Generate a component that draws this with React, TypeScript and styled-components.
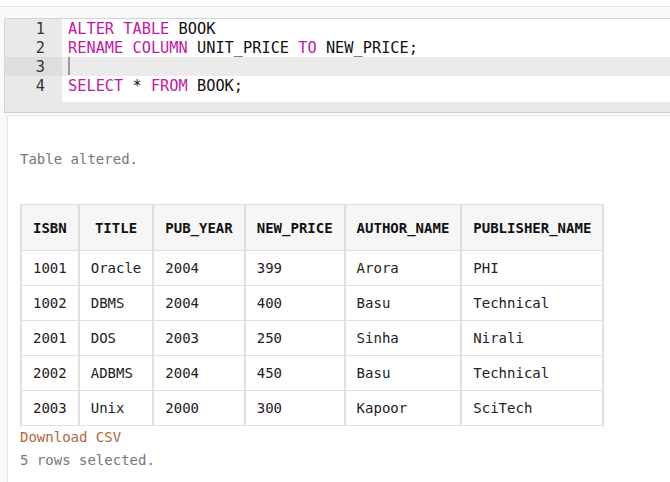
import React from "react";
import styled, { createGlobalStyle } from "styled-components";

const Global = createGlobalStyle`
  html, body { margin: 0; padding: 0; background: #ffffff; }
  body { font-family: "DejaVu Sans Mono", monospace; }
`;

const Page = styled.div`
  padding-top: 6px;
  width: 670px;
  height: 482px;
  overflow: hidden;
  box-sizing: border-box;
`;

const Workspace = styled.div`
  border-top: 1px solid #e2e2e2;
  background: #f9f9f9;
  padding-top: 11px;
  height: 100%;
`;

const Editor = styled.div`
  margin-left: 4px;
  border-top: 1px solid #d4d4d4;
  border-left: 1px solid #d4d4d4;
  background: #ffffff;
`;

const Lines = styled.div`
  display: grid;
  grid-template-columns: 57px 1fr;
  grid-auto-rows: 19px;
  background: linear-gradient(to right, #e9e9e9 57px, #ffffff 57px);
  padding-bottom: 7px;
  font-family: "DejaVu Sans Mono", monospace;
  font-size: 15.3px;
`;

const Gutter = styled.div<{ $active?: boolean }>`
  background: ${(p) => (p.$active ? "#dedede" : "#e9e9e9")};
  color: #333;
  text-align: right;
  padding-right: 17px;
  padding-top: 1px;
  line-height: 18px;
`;

const Code = styled.div<{ $active?: boolean }>`
  background: ${(p) => (p.$active ? "#ebebeb" : "transparent")};
  padding-left: 6px;
  padding-top: 1px;
  line-height: 18px;
  white-space: pre;
  color: #111;
`;

const Kw = styled.span`
  color: #c3199f;
`;

const Cursor = styled.span`
  display: inline-block;
  width: 2px;
  height: 18px;
  margin-top: -1px;
  background: #9a9a9a;
  vertical-align: top;
`;

const Scrollbar = styled.div`
  height: 10px;
  background: #e8e8e8;
  border-bottom: 1px solid #cfcfcf;
`;

const Output = styled.div`
  margin-left: 7px;
  margin-top: 2px;
  border-left: 1px solid #e6e6e6;
  border-top: 1px solid #ededed;
  background: #ffffff;
  padding: 33px 12px 20px 12px;
  font-family: "DejaVu Sans Mono", monospace;
  font-size: 14px;
  height: 400px;
`;

const Message = styled.div`
  color: #777;
  line-height: 20px;
  margin-bottom: 35px;
`;

const Table = styled.table`
  border-collapse: collapse;
  font-size: 14px;
  font-family: "DejaVu Sans Mono", monospace;
`;

const Th = styled.th`
  background: #f6f6f6;
  border: 1px solid #dedede;
  border-left-width: 2px;
  border-right-width: 2px;
  height: 45px;
  padding: 0 11px;
  font-weight: bold;
  color: #111;
  text-align: center;
  white-space: nowrap;
`;

const Td = styled.td`
  border: 1px solid #e0e0e0;
  border-left: 2px solid #e0e0e0;
  border-right: 2px solid #e0e0e0;
  height: 34px;
  padding: 0 11px;
  color: #222;
  white-space: nowrap;
`;

const Link = styled.div`
  color: #b0683a;
  line-height: 20px;
  margin-top: 1px;
`;

const Footer = styled.div`
  color: #777;
  line-height: 20px;
  margin-top: 3px;
`;

const columns = ["ISBN", "TITLE", "PUB_YEAR", "NEW_PRICE", "AUTHOR_NAME", "PUBLISHER_NAME"];
const rows = [
  ["1001", "Oracle", "2004", "399", "Arora", "PHI"],
  ["1002", "DBMS", "2004", "400", "Basu", "Technical"],
  ["2001", "DOS", "2003", "250", "Sinha", "Nirali"],
  ["2002", "ADBMS", "2004", "450", "Basu", "Technical"],
  ["2003", "Unix", "2000", "300", "Kapoor", "SciTech"],
];

export default function App() {
  return (
    <>
      <Global />
      <Page>
        <Workspace>
          <Editor>
            <Lines>
              <Gutter>1</Gutter>
              <Code>
                <Kw>ALTER</Kw> <Kw>TABLE</Kw> BOOK
              </Code>
              <Gutter>2</Gutter>
              <Code>
                <Kw>RENAME</Kw> <Kw>COLUMN</Kw> UNIT_PRICE <Kw>TO</Kw> NEW_PRICE;
              </Code>
              <Gutter $active>3</Gutter>
              <Code $active>
                <Cursor />
              </Code>
              <Gutter>4</Gutter>
              <Code>
                <Kw>SELECT</Kw> * <Kw>FROM</Kw> BOOK;
              </Code>
            </Lines>
            <Scrollbar />
          </Editor>
          <Output>
            <Message>Table altered.</Message>
            <Table>
              <thead>
                <tr>
                  {columns.map((c) => (
                    <Th key={c}>{c}</Th>
                  ))}
                </tr>
              </thead>
              <tbody>
                {rows.map((r) => (
                  <tr key={r[0]}>
                    {r.map((v, i) => (
                      <Td key={i}>{v}</Td>
                    ))}
                  </tr>
                ))}
              </tbody>
            </Table>
            <Link>Download CSV</Link>
            <Footer>5 rows selected.</Footer>
          </Output>
        </Workspace>
      </Page>
    </>
  );
}
